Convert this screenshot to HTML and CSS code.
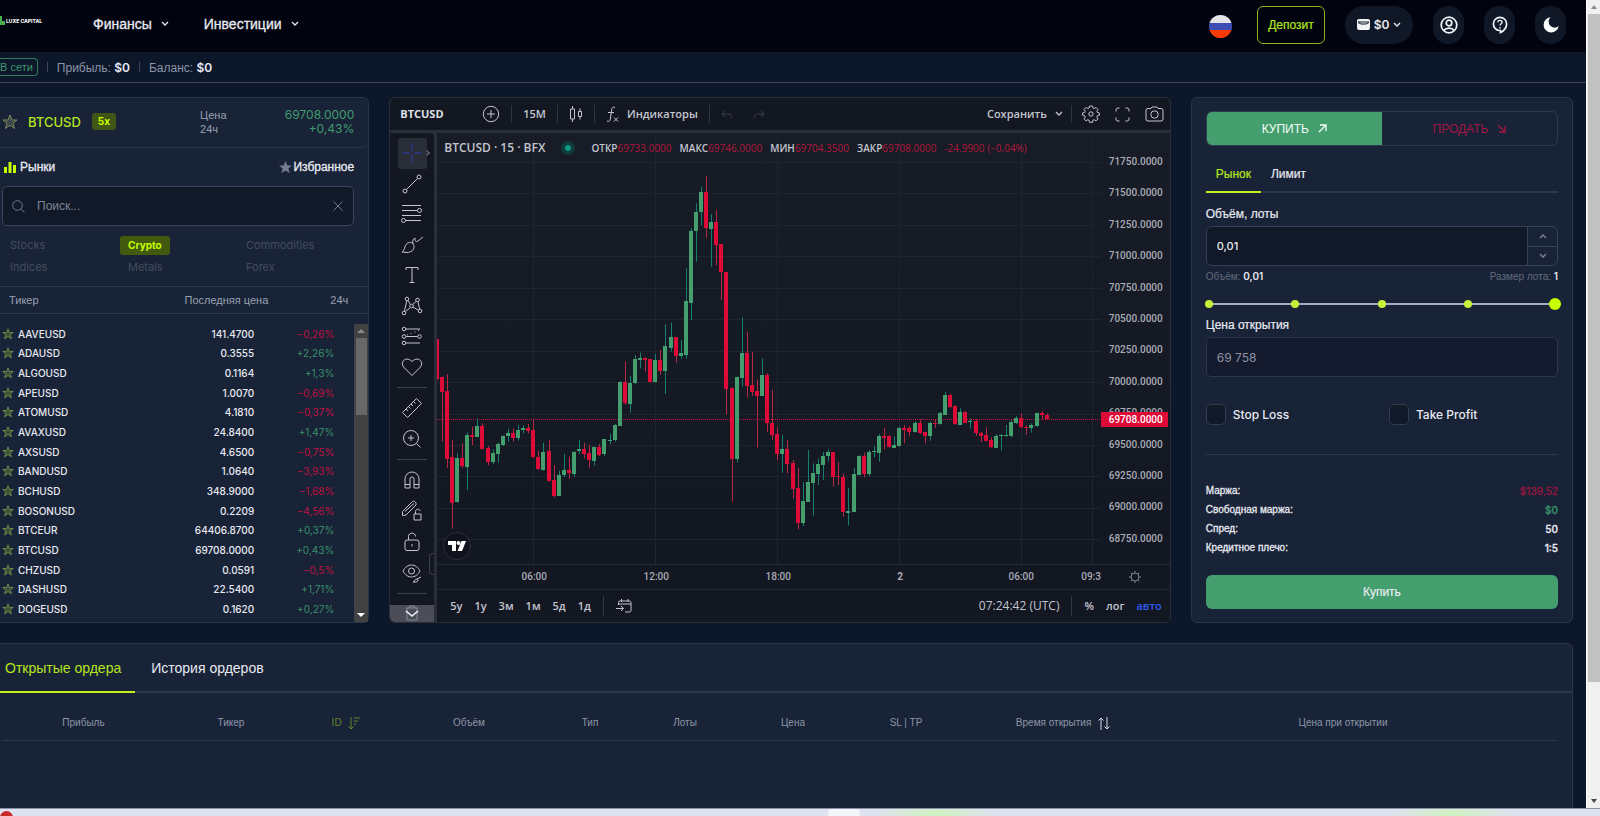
FILE: index.html
```html
<!DOCTYPE html>
<html lang="ru">
<head>
<meta charset="utf-8">
<title>Luxe Capital</title>
<link rel="stylesheet" href="styles.css">
</head>
<body>
<div class="window">
<div class="page">
  <header class="topbar">
    <a class="logo" href="#"><svg width="5" height="10" viewBox="0 0 5 10" fill="#4caf50"><path d="M0 0h2v5h3v4H0z"/></svg><span>LUXE CAPITAL</span></a>
    <nav class="nav">
      <button>Финансы <svg class="chev" viewBox="0 0 8 6"><path d="M1 1l3 3 3-3"/></svg></button>
      <button>Инвестиции <svg class="chev" viewBox="0 0 8 6"><path d="M1 1l3 3 3-3"/></svg></button>
    </nav>
    <div class="tools">
      <button class="flag" aria-label="Русский"></button>
      <button class="deposit">Депозит</button>
      <button class="wallet"><svg width="13" height="11" viewBox="0 0 13 11"><rect width="13" height="11" rx="2" fill="#f1f3f8"/><path d="M1 3h11M1 3.500l3 1.500h5l3-1.500" stroke="#111827"/></svg>$0 <svg class="chev" viewBox="0 0 8 6"><path d="M1 1l3 3 3-3"/></svg></button>
      <button class="pill" aria-label="Профиль"><svg width="18" height="18" viewBox="0 0 18 18" stroke="#f1f3f8" stroke-width="1.7"><circle cx="9" cy="9" r="7.8"/><circle cx="9" cy="7" r="2.8"/><path d="M3.8 14.4c2.600-3 7.800-3 10.400 0"/></svg></button>
      <button class="pill" aria-label="Помощь"><svg width="16" height="18" viewBox="0 0 16 18" stroke="#f1f3f8" stroke-width="1.700"><path d="M8.500 16.500v-2H8a6.600 6.600 0 1 1 6.600-6.600c0 3.800-2.600 6.800-6.100 8.600z"/><path d="M5.900 6.300c0-2.600 4.200-2.600 4.200 0 0 1.500-2.100 1.500-2.100 3.300M8 11v1.500" stroke-width="1.400"/></svg></button>
      <button class="pill" aria-label="Тема"><svg width="16" height="16" viewBox="0 0 16 16" fill="#fff"><path d="M7.500.3A7.600 7.600 0 1 0 15.700 9 5.900 5.900 0 1 1 7.500.3z"/></svg></button>
    </div>
  </header>

  <div class="status">
    <span class="online">В сети</span><i></i>
    <span>Прибыль: <b>$0</b></span><i></i>
    <span>Баланс: <b>$0</b></span>
  </div>

  <main class="board">
    <section class="panel market">
      <div class="instrument">
        <svg class="star big" viewBox="0 0 16 16"><path d="M8 1l2 5h5l-4 3.200 1.600 5.300L8 11.300l-4.600 3.200L5 9.200 1 6h5z"/></svg>
        <strong>BTCUSD</strong><em>5x</em>
        <div class="lbl">Цена<br>24ч</div>
        <div class="val">69708.0000<br>+0,43%</div>
      </div>
      <div class="mhead">
        <span><svg width="12" height="12" viewBox="0 0 12 12" fill="#c6ff00"><path d="M0 6h3v6H0zM4.500 1h3v11h-3zM9 4h3v8H9z"/></svg>Рынки</span>
        <span><svg width="13" height="13" viewBox="0 0 16 16" fill="#757d8e"><path d="M8 0l2.200 5.600H16l-4.600 3.700L13.200 15 8 11.600 2.800 15l1.800-5.700L0 5.600h5.800z"/></svg>Избранное</span>
      </div>
      <label class="search">
        <svg width="13" height="13" viewBox="0 0 13 13"><circle cx="5.500" cy="5.500" r="4.800"/><path d="M9 9l3.500 3.500"/></svg>
        <input type="text" placeholder="Поиск..." aria-label="Поиск">
        <svg width="10" height="10" viewBox="0 0 10 10"><path d="M.5.5l9 9M9.500.5l-9 9"/></svg>
      </label>
      <div class="cats">
        <button>Stocks</button><button class="on">Crypto</button><button>Commodities</button>
        <button>Indices</button><button>Metals</button><button>Forex</button>
      </div>
      <div class="thead"><span>Тикер</span><span>Последняя цена</span><span>24ч</span></div>
      <div class="listwrap">
        <table class="list"><tbody id="list"></tbody></table>
        <div class="scroll dark"><i class="up"></i><b></b><i class="down"></i></div>
      </div>
    </section>

    <section class="panel chart">
      <div class="ctop">
        <b class="sym">BTCUSD</b>
        <button aria-label="Сравнить"><svg width="18" height="18" viewBox="0 0 18 18"><circle cx="9" cy="9" r="7.700"/><path d="M9 5v8M5 9h8"/></svg></button>
        <i></i><button class="m15">15М</button><i></i>
        <button aria-label="Свечи"><svg width="14" height="18" viewBox="0 0 14 18"><path d="M1.500 4h4v10h-4zM3.500 1v3M3.500 14v3M9.500 6.500h3v5h-3zM11 3.500v3M11 11.500v3"/></svg></button>
        <i></i>
        <button class="ind"><svg width="13" height="17" viewBox="0 0 13 17"><path d="M9 1.500c-2-1-3 0-3.300 2L4.300 13c-.3 2-1.500 3-3.300 2M2 6.500h6M8 11.500l4 4M12 11.500l-4 4"/></svg>Индикаторы</button>
        <i></i>
        <button class="dim" aria-label="Отменить"><svg width="12" height="9" viewBox="0 0 12 9"><path d="M4 1L1 4l3 3M1 4h6c3 0 4 1.500 4 4"/></svg></button>
        <button class="dim" aria-label="Повторить"><svg width="12" height="9" viewBox="0 0 12 9"><path d="M8 1l3 3-3 3M11 4H5C2 4 1 5.500 1 8"/></svg></button>
        <button class="save">Сохранить <svg class="chev" viewBox="0 0 8 6"><path d="M1 1l3 3 3-3"/></svg></button>
        <i></i>
        <button aria-label="Настройки"><svg width="18" height="18" viewBox="0 0 18 18"><path d="M7.500 1h3l.4 2 1.300.6 1.800-1.200 2 2-1.200 1.800.6 1.300 2 .4v2.400l-2 .4-.6 1.400 1.200 1.800-2 2-1.800-1.200-1.300.6-.4 2h-3l-.4-2-1.300-.6L4 15.900l-2-2 1.200-1.800-.6-1.400-2-.4V7.900l2-.4.6-1.300L2 4.400l2-2 1.800 1.200L7.100 3z"/><circle cx="9" cy="9" r="2.200"/></svg></button>
        <button aria-label="Во весь экран"><svg width="15" height="15" viewBox="0 0 15 15"><path d="M1 4.500V3a2 2 0 0 1 2-2h1.500M10.500 1H12a2 2 0 0 1 2 2v1.500M14 10.500V12a2 2 0 0 1-2 2h-1.500M4.500 14H3a2 2 0 0 1-2-2v-1.500"/></svg></button>
        <button aria-label="Снимок"><svg width="19" height="16" viewBox="0 0 19 16"><path d="M6 2.500L7 1h5l1 1.500h3a2 2 0 0 1 2 2V13a2 2 0 0 1-2 2H3a2 2 0 0 1-2-2V4.500a2 2 0 0 1 2-2z"/><circle cx="9.500" cy="8.500" r="3.700"/></svg></button>
      </div>
      <div class="cbody">
        <div class="draw">
          <div class="grp g8">
            <button class="cross" aria-label="Курсор"><svg viewBox="0 0 28 28"><path d="M14 4v8M14 16v8M4 14h8M16 14h8"/></svg></button>
            <button aria-label="Линия"><svg viewBox="0 0 28 28"><circle cx="7" cy="21" r="2"/><circle cx="21" cy="7" r="2"/><path d="M8.500 19.500l11-11"/></svg></button>
            <button aria-label="Фибоначчи"><svg viewBox="0 0 28 28"><path d="M4 5.500h19M4 10.500h15M4 15.500h19M8 20.500h15"/><circle cx="21.500" cy="10.500" r="2"/><circle cx="5.500" cy="20.500" r="2"/></svg></button>
            <button aria-label="Кисть"><svg viewBox="0 0 28 28"><path d="M4 21c3-1 2-6 5-8.500 3-2.500 7-.5 7 3s-3 6-7 6zM15 13c-1-3 0-5 2-6 0 4 1 4 3 3l5-4"/></svg></button>
            <button aria-label="Текст"><svg viewBox="0 0 28 28"><path d="M8 9V6.500h12V9M14 6.500v15M11.500 21.500h5"/></svg></button>
            <button aria-label="Паттерны"><svg viewBox="0 0 28 28"><circle cx="9" cy="7" r="1.800"/><circle cx="19.500" cy="8" r="1.800"/><circle cx="13.500" cy="14" r="1.800"/><circle cx="6" cy="21" r="1.800"/><circle cx="22" cy="19" r="1.800"/><path d="M8.700 9L6.500 19M10 8.500l2.500 4M18 9.500l-3.300 3M20 10l1.600 7M7.500 19.500l5-4M15 15l5.400 3.200"/></svg></button>
            <button aria-label="Прогноз"><svg viewBox="0 0 28 28"><circle cx="6" cy="7" r="1.800"/><circle cx="6" cy="14.500" r="1.800"/><circle cx="6" cy="21" r="1.800"/><circle cx="21.500" cy="14.500" r="1.800"/><path d="M8 7h14M8 14.500h11.500M8 21h14"/><path d="M9 13l13-5" stroke-dasharray="1 3"/></svg></button>
            <button aria-label="Фигуры"><svg viewBox="0 0 28 28"><path d="M14 22.500L6 14.500C1 9 8 2.500 14 8.500c6-6 13 .5 8 6z"/></svg></button>
          </div>
          <hr>
          <div class="grp g2">
            <button aria-label="Линейка"><svg viewBox="0 0 28 28"><path d="M4.500 18.500l14-14 5 5-14 14zM8 15l2 2M10.500 12.500l2 2M13 10l2 2M15.500 7.500l2 2" stroke-linejoin="round"/></svg></button>
            <button aria-label="Масштаб"><svg viewBox="0 0 28 28"><circle cx="13" cy="13" r="7.500"/><path d="M18.500 18.500l4 4M13 10v6M10 13h6"/></svg></button>
          </div>
          <hr>
          <div class="grp g4">
            <button aria-label="Магнит"><svg viewBox="0 0 28 28"><path d="M7 22v-9a7 7 0 0 1 14 0v9h-5v-9a2 2 0 0 0-4 0v9zM7 18.500h5M16 18.500h5"/></svg></button>
            <button aria-label="Рисование"><svg viewBox="0 0 28 28"><path d="M4.500 18.500v-4l10-10c2-1 4 1 3.500 3.500l-10 10zM7 14.500l9-8M16 17h7v6h-7zM17.500 17v-2.500c0-3 4.500-3 4.500-.5"/></svg></button>
            <button aria-label="Блокировка"><svg viewBox="0 0 28 28"><rect x="7" y="12" width="14" height="10.500" rx="2"/><path d="M10.500 12V8.500c0-4.500 7-4.500 7 0M14 16v2.500"/></svg></button>
            <button aria-label="Скрыть"><svg viewBox="0 0 28 28"><path d="M5 12c4-8 13-8 17 0-4 8-13 8-17 0z"/><circle cx="13.500" cy="12" r="3"/><path d="M15 23c2 0 1-3 4-3 2 0 1 3-1 3zM19 20l4-2"/></svg></button>
          </div>
          <hr>
          <div class="more"><svg width="16" height="16" viewBox="0 0 16 16"><path d="M2 3h12M5.500 3V1h5v2M3 3v12h10V3" stroke="#858994"/><path d="M2 6l6 5 6-5" stroke="#f0f2f5" stroke-width="1.600"/></svg></div>
          <span class="arrow"></span>
          <span class="collapse"></span>
        </div>
        <div class="view">
          <div class="plotrow">
            <div class="plot">
              <svg id="plot" width="100%" height="100%"></svg>
              <div class="legend"><b>BTCUSD · 15 · BFX</b><i></i><span>ОТКР<u>69733.0000</u></span><span>МАКС<u>69746.0000</u></span><span>МИН<u>69704.3500</u></span><span>ЗАКР<u>69708.0000</u></span><u>-24.9900 (−0.04%)</u></div>
              <div class="tv"><svg width="18" height="10" viewBox="0 0 18 10" fill="#fff"><path d="M0 0h8v10H4V4H0zM13.500 0H18l-4 10H9.500z"/><circle cx="10.500" cy="2" r="2"/></svg></div>
            </div>
            <div class="prices">
              <span>71750.0000</span><span>71500.0000</span><span>71250.0000</span><span>71000.0000</span><span>70750.0000</span><span>70500.0000</span><span>70250.0000</span><span>70000.0000</span><span>69750.0000</span><span>69500.0000</span><span>69250.0000</span><span>69000.0000</span><span>68750.0000</span>
              <b>69708.0000</b>
            </div>
          </div>
          <div class="times">
            <div class="tl"><span>06:00</span><span>12:00</span><span>18:00</span><b>2</b><span>06:00</span><span class="cut">09:30</span></div>
            <button aria-label="Настройки шкалы"><svg width="14" height="14" viewBox="0 0 14 14"><circle cx="7" cy="7" r="4"/><path d="M7 1v2M7 11v2M1 7h2M11 7h2M2.800 2.800l1.300 1.300M9.900 9.900l1.300 1.300M2.800 11.200l1.300-1.300M9.900 4.100l1.300-1.300"/></svg></button>
          </div>
          <div class="ranges">
            <button>5y</button><button>1y</button><button>3м</button><button>1м</button><button>5д</button><button>1д</button><i></i>
            <button aria-label="Дата"><svg width="16" height="14" viewBox="0 0 16 14"><path d="M2.500 6V3.500a1.500 1.500 0 0 1 1.500-1.500h9.500A1.500 1.500 0 0 1 15 3.500v8a1.500 1.500 0 0 1-1.500 1.500H9M2.500 5H15M5.500 0v3M12 0v3M0 9.500h7M5 7l2.500 2.500L5 12"/></svg></button>
            <span class="clock">07:24:42 (UTC)</span><i></i>
            <button>%</button><button>лог</button><button class="auto">авто</button>
          </div>
        </div>
      </div>
    </section>

    <section class="panel trade">
      <div class="sides">
        <button class="buy">КУПИТЬ <svg width="9" height="9" viewBox="0 0 9 9"><path d="M1 8l7-7M2 1h6v6"/></svg></button>
        <button class="sell">ПРОДАТЬ <svg width="9" height="9" viewBox="0 0 9 9"><path d="M1 1l7 7M8 2v6H2"/></svg></button>
      </div>
      <div class="ttabs"><button class="on">Рынок</button><button>Лимит</button></div>
      <label class="flabel" for="vol">Объём, лоты</label>
      <div class="stepper">
        <input id="vol" type="text" inputmode="decimal" value="0,01">
        <div><button aria-label="Больше"><svg class="chev" viewBox="0 0 8 6"><path d="M1 5l3-3 3 3"/></svg></button><button aria-label="Меньше"><svg class="chev" viewBox="0 0 8 6"><path d="M1 1l3 3 3-3"/></svg></button></div>
      </div>
      <div class="hint"><span>Объём: <b>0,01</b></span><span>Размер лота: <b>1</b></span></div>
      <div class="slider"><div class="dots"><i></i><i></i><i></i><i></i><i></i></div><input type="range" min="0" max="4" value="4" aria-label="Объём"></div>
      <label class="flabel" for="open">Цена открытия</label>
      <input class="openprice" id="open" type="text" value="69 758" readonly>
      <div class="checks"><label><input type="checkbox">Stop Loss</label><label><input type="checkbox">Take Profit</label></div>
      <dl class="sum">
        <div><dt>Маржа:</dt><dd class="neg">$139,52</dd></div>
        <div><dt>Свободная маржа:</dt><dd class="pos">$0</dd></div>
        <div><dt>Спред:</dt><dd>50</dd></div>
        <div><dt>Кредитное плечо:</dt><dd>1:5</dd></div>
      </dl>
      <button class="submit">Купить</button>
    </section>
  </main>

  <section class="panel orders">
    <div class="otabs"><button class="on">Открытые ордера</button><button>История ордеров</button></div>
    <table>
      <colgroup><col class="c1"><col class="c2"><col class="c3"><col class="c4"><col class="c5"><col class="c6"><col class="c7"><col class="c8"><col class="c9"><col class="c10"><col></colgroup>
      <thead><tr><th>Прибыль</th><th>Тикер</th><th class="sorted">ID <svg width="12" height="13" viewBox="0 0 12 13"><path d="M3 0v12M.5 9.500L3 12l2.500-2.500M6 1h6M6 4h4M6 7h2"/></svg></th><th>Объём</th><th>Тип</th><th>Лоты</th><th>Цена</th><th>SL | TP</th><th>Время открытия <svg class="lt" width="12" height="13" viewBox="0 0 12 13"><path d="M3 13V1M.5 3.500L3 1l2.500 2.500M9 0v12M6.500 9.500L9 12l2.500-2.500"/></svg></th><th>Цена при открытии</th><td></td></tr></thead>
    </table>
  </section>
</div>
<div class="scroll light"><i class="up"></i><b></b><i class="down"></i></div>
</div>
<footer class="taskbar"><i></i><b></b></footer>
<script src="app.js"></script>
</body>
</html>
```
FILE: styles.css
```css
*{box-sizing:border-box}
body{margin:0;min-height:100vh;display:flex;flex-direction:column;background:#0d172a;color:#e8eaf2;font:11px/14px "Liberation Sans",sans-serif}
button{font:inherit;color:inherit;background:none;border:0;padding:0;margin:0;display:inline-flex;align-items:center;justify-content:center}
input{font:inherit;color:inherit;margin:0}
svg{flex:none}
:where(svg:not([fill])){fill:none}
.chev{width:8px;height:6px;stroke:currentColor;stroke-width:1.300}
.window{flex:1;display:flex}
.page{flex:1;min-width:0;display:flex;flex-direction:column}
.topbar{height:52px;background:#01040f;display:flex;align-items:center;padding:0 20px 3px 0}
.logo{display:flex;align-items:center;gap:1px;color:#f3f5f8;text-decoration:none;font:800 5px/10px Inter,sans-serif;width:93px;padding-bottom:7px}
.nav{display:flex;gap:35px;flex:1;font-size:14px;padding-bottom:1px;-webkit-text-stroke:.3px}
.nav button{gap:9px}
.tools{display:flex;align-items:center}
.flag{width:23px;height:23px;border-radius:50%;background:linear-gradient(#e4e4e8 33%,#3c4eb4 33% 66%,#f83a08 66%);margin:4px 25px 0 0}
.deposit{width:68px;height:38px;border:1px solid #8fb31a;border-radius:6px;color:#b5e61d;font-size:12px;margin-right:20px;-webkit-text-stroke:.2px}
.wallet{width:68px;height:38px;border-radius:19px;background:#101827;gap:4px;font:600 12px Inter,sans-serif;margin-right:20px}
.pill{width:31px;height:38px;border-radius:16px;background:#101827;margin-right:20px}
.pill:last-child{margin-right:0}
.status{height:31px;border-bottom:1px solid #3c4658;display:flex;align-items:center;color:#8b94a6;font-size:12px}
.status b{color:#e8eaf6;font:600 12px Inter,sans-serif}
.status i{width:1px;height:10px;background:#3c4658;margin:0 9px}
.online{border:1px solid #317c5c;border-left:0;border-radius:0 4px 4px 0;color:#3c966c;font-size:11px;line-height:16px;padding:0 4px 0 0}
.board{display:grid;grid-template-columns:369fr 781fr 382fr;gap:20px;padding:14px 13px 20px 0}
.panel{background:#192337;border:1px solid #2a3548;border-radius:6px;min-width:0}
.market{border-left:0;border-radius:0 6px 6px 0}
.instrument{height:50px;border-bottom:1px solid #2a3548;border-radius:0 0 6px 0;display:flex;align-items:center;padding:0 14px 2px 2px}
.star{width:12px;height:12px;stroke:#7c9d52;fill:#3a5335}
.star.big{width:16px;height:16px;stroke:#7d8758;fill:#3b4649}
.instrument strong{font:500 13px Inter,sans-serif;color:#b5e61d;margin:0 11px 0 10px}
.instrument em{font:700 10px/17px Inter,sans-serif;background:#415514;color:#c6ff00;border-radius:3px;padding:0 6px}
.lbl{color:#98a1b2;flex:1;margin-left:84px}
.val{font:12px/14px Inter,sans-serif;color:#3f9c70;text-align:right}
.mhead{display:flex;justify-content:space-between;padding:10px 14px 0 4px;font-size:12px;height:38px;-webkit-text-stroke:.3px}
.mhead span{display:flex;gap:4px;align-items:center;height:18px}
.mhead span:last-child{gap:1px}
.search{display:flex;align-items:center;height:40px;margin:0 14px 0 2px;background:#111827;border:1px solid #3b4657;border-radius:5px;padding:0 10px 0 9px}
.search svg{stroke:#737b8a}
.search input{flex:1;min-width:0;background:none;border:0;outline:0;padding:0 12px;font-size:12px}
.search input::placeholder{color:#7c8493;opacity:1}
.cats{display:grid;grid-template-columns:repeat(3,118px);height:60px;padding:8px 0 8px 2px;color:#414c5e;font:11px Inter,sans-serif;justify-items:start;align-items:center}
.cats button{height:19px;padding:0 8px}
.cats .on{background:#415a0e;color:#c6ff00;border-radius:3px;font-weight:700;font-size:10px}
.thead{display:flex;height:28px;border:solid #2a3548;border-width:1px 0;align-items:center;color:#98a1b2;padding:0 20px 0 9px}
.thead span:nth-child(2){flex:1;text-align:right;padding-right:62px}
.listwrap{display:flex;align-items:flex-start;height:308px;padding-top:10px}
.list{flex:1;height:295px;border-collapse:collapse;font:500 10px/14px Inter,sans-serif}
.list td{padding:0;text-align:right}
.list td:first-child{text-align:left;padding-left:2px}
.list td:first-child span{display:flex;gap:4px;align-items:center}
.list td:nth-child(2){width:130px}
.list td:last-child{width:100px;padding-right:20px;font-weight:400}
.pos{color:#37906a}
.list .neg{color:#bf1140}
.scroll{display:flex;flex-direction:column;align-items:center;position:relative}
.scroll i{height:14px;display:flex;align-items:center}
.scroll i:after{content:"";border:4px solid transparent;border-top:0;border-bottom:4px solid #8a8a8a}
.scroll .down{margin-top:auto}
.scroll .down:after{transform:rotate(180deg)}
.dark{width:14px;background:#424242;align-self:stretch}
.dark b{width:11px;height:77px;background:#686868}
.dark .down:after{border-bottom-color:#fff}
.light{width:14px;background:#f0f0f0;border-left:1px solid #fff}
.light b{width:12px;flex:0 1 668px;background:#c1c1c1}
.light i:after{border-left-width:3px;border-right-width:3px}
.light .down:after{border-bottom-color:#444}

.chart{background:#131722;border-color:#2a2f3b;color:#c3c6cf;display:flex;flex-direction:column;overflow:hidden;font-family:"Open Sans",sans-serif}
.chart svg{stroke:currentColor}
.ctop{height:32px;display:flex;align-items:center;padding:0 6px 0 10px;font-size:11px;font-weight:600}
.ctop i{width:1px;height:18px;background:#30343f;margin:0 11px}
.sym{width:82px;color:#dfe1e8;font-weight:700}
.ind{gap:8px}
.dim{color:#3b3f4a;margin-right:20px}
.save{gap:8px;margin-left:auto}
.ctop .save+i{margin:0 10px 0 8px}
.ctop .save~button{margin-right:15px}
.ctop .save~button:last-child{margin-right:0}
.cbody{flex:1;display:flex;background:#2a2e39;padding-top:3px;gap:3px}
.draw{width:44px;background:#131722;border-radius:0 4px 0 0;padding-top:5px;position:relative}
.draw svg{width:28px;height:28px}
.grp{display:grid;grid-auto-rows:1fr;justify-items:center}
.g8{height:244px}.g2{height:61px}.g4{height:123px}
.draw button{border-radius:3px;width:29px}
.cross{background:#2a2e39;color:#2c3ba8}
.draw hr{border:0;height:1px;background:#3b3f4b;margin:5px 7px}
.more{position:absolute;left:0;right:0;bottom:0;height:17px;background:#4b4e59;display:flex;justify-content:center}
.draw .more svg{width:16px;height:16px;stroke:none}
.arrow{position:absolute;right:5px;top:18px;width:4px;height:4px;border:solid #777b86;border-width:1px 1px 0 0;transform:rotate(45deg)}
.collapse{position:absolute;right:0;bottom:47px;width:5px;height:22px;border:1px solid #3b3f4b;border-right:0;border-radius:4px 0 0 4px}
.view{flex:1;min-width:0;display:flex;flex-direction:column;background:#131722;border-radius:4px 0 0 0}
.plotrow{flex:1;display:flex}
.plot{flex:1;min-width:0;position:relative;overflow:hidden;background:linear-gradient(#181c27,#131722)}
.plot>svg{position:absolute;inset:0;stroke:none}
.legend{position:absolute;left:7px;top:6px;display:flex;gap:8px;align-items:center;font-size:10px;line-height:18px;font-weight:600;white-space:nowrap}
.legend b{font-size:12px;font-weight:600}
.legend i{width:14px;height:14px;border-radius:50%;background:#0d9a80;border:4px solid #103d3c;margin:0 8px}
.legend u{text-decoration:none;color:#b0183c;font-weight:400}
.tv{position:absolute;left:6px;bottom:4px;width:28px;height:28px;border:1px solid #2a2e39;border-radius:50%;background:#10131c;display:flex;align-items:center;justify-content:center}
.tv svg{stroke:none}
.prices{width:69px;position:relative;display:flex;flex-direction:column;justify-content:space-between;padding:22px 0 18px 8px;font:500 10px/14px Roboto,sans-serif;background:linear-gradient(#181c27,#131722);color:#a9acb6}
.prices b{position:absolute;left:0;right:2px;top:279px;line-height:15px;padding-left:8px;background:#de0a38;color:#fff;font-weight:500}
.times{height:25px;border-top:1px solid #242833;display:flex;align-items:center;font:500 10px/14px Roboto,sans-serif;color:#a9acb6}
.tl{flex:1;min-width:0;display:grid;grid-template-columns:repeat(4,122px) 120px 1fr;padding-left:36px;text-align:center;overflow:hidden}
.tl .cut{text-align:left;min-width:0}
.times button{width:69px;color:#7d818c}
.ranges{height:33px;border-top:1px solid #242833;display:flex;align-items:center;gap:12px;padding:0 8px 0 13px;font-size:11px;font-weight:600}
.ranges i{width:1px;height:20px;background:#353945}
.clock{margin-left:auto;font-size:12px;font-weight:400}
.auto{color:#2f5bee}

.trade{padding:13px 14px 13px;display:flex;flex-direction:column}
.sides{display:grid;grid-template-columns:1fr 1fr;height:35px;border:1px solid #2e3a4e;border-radius:6px;overflow:hidden;font-size:12px}
.sides button{gap:9px}
.sides svg{stroke:currentColor;stroke-width:1.300}
.buy{background:#449e6e;color:#f4fff8}
.sell{color:#a31643}
.ttabs{display:flex;margin-top:15px;border-bottom:2px solid #2d384b;font-size:12px;height:32px;-webkit-text-stroke:.2px}
.ttabs button{padding:0 10px 5px;margin-bottom:-2px;border-bottom:2px solid transparent}
.ttabs .on{color:#b5e61d;border-color:#c6f01c}
.flabel{margin-top:13px;font-size:12px;line-height:16px;-webkit-text-stroke:.2px}
.stepper{margin-top:4px;height:40px;display:flex;border:1px solid #364154;border-radius:6px;overflow:hidden}
.stepper input{flex:1;min-width:0;background:#111827;border:0;padding:0 10px;font:500 11px Inter,sans-serif}
.stepper div{width:30px;border-left:1px solid #364154;display:grid;color:#7d8594}
.stepper button+button{border-top:1px solid #364154}
.hint{display:flex;justify-content:space-between;color:#606a7c;margin-top:3px;font-size:10px;line-height:16px}
.hint b{color:#e4e6ee;font:600 10px Inter,sans-serif}
.slider{position:relative;height:18px;margin:10px -3px 0}
.slider input{-webkit-appearance:none;appearance:none;position:absolute;inset:0;width:100%;height:18px;background:none}
.slider input::-webkit-slider-thumb{-webkit-appearance:none;width:12px;height:12px;border-radius:50%;background:#c6ff00}
.dots{position:absolute;inset:0 2px;display:flex;justify-content:space-between;align-items:center;background:linear-gradient(#a7aec0,#a7aec0) center/calc(100% - 8px) 2px no-repeat}
.dots i{width:8px;height:8px;border-radius:50%;background:#c6f03a}
.slider+.flabel{margin-top:4px}
.openprice{height:40px;margin-top:4px;background:#151b2e;border:1px solid #2c374b;border-radius:5px;padding:0 10px;color:#8d93a3;font:12px Inter,sans-serif;width:100%}
.checks{display:grid;grid-template-columns:1fr 1fr;gap:14px;margin-top:27px;padding-bottom:29px;border-bottom:1px solid #2d384b;font:500 12px Inter,sans-serif}
.checks label{display:flex;align-items:center;gap:7px}
.checks input{-webkit-appearance:none;appearance:none;width:20px;height:21px;border:1px solid #323d51;border-radius:5px;background:#111827}
.sum{margin:28px 0 0;display:flex;flex-direction:column;gap:3px;font-size:10px}
.sum div{display:flex;justify-content:space-between;line-height:16px;-webkit-text-stroke:.3px}
.sum dd{margin:0;font:500 10px/16px Inter,sans-serif}
.sum dd.neg{color:#8e1640}
.submit{margin-top:auto;height:34px;background:#449e6e;border-radius:6px;font-size:12px;-webkit-text-stroke:.2px}

.orders{flex:1;min-height:164px;margin-right:13px;border-left:0;border-bottom:0;border-radius:0 6px 0 0}
.otabs{display:flex;height:49px;border-bottom:2px solid #2d384b;font-size:14px}
.otabs button{padding:0 16px 0;margin-bottom:-2px;border-bottom:2px solid transparent}
.otabs .on{color:#b5e61d;border-color:#c6f01c;padding:0 14px 0 5px}
.orders table{width:calc(100% - 17px);margin-left:2px;table-layout:fixed;border-collapse:collapse;border-bottom:1px solid #2d384b}
.orders th{height:47px;padding:13px 0 0;font-weight:400;font-size:10px;color:#8d96a8}
.orders th svg{stroke:currentColor;vertical-align:middle;margin-left:4px}
.orders th .lt{stroke:#d6d9e2}
.orders .sorted{color:#66842a}
.c1{width:163px}.c2{width:132px}.c3{width:98px}.c4{width:148px}.c5{width:94px}.c6{width:96px}.c7{width:120px}.c8{width:106px}.c9{width:208px}.c10{width:352px}
.taskbar{height:8px;border-top:1px solid #8c93a6;display:flex;overflow:hidden;align-items:center;background:radial-gradient(ellipse 60px 14px at 935px 5px,#cdf2bd,transparent),radial-gradient(ellipse 60px 14px at 1452px 5px,#cdf2bd,transparent),#dfe2ef}
.taskbar i{width:13px;height:13px;border-radius:50%;background:#c92a2a;margin-top:10px}
.taskbar b{width:32px;height:8px;background:#f5f6fa;border-radius:4px;margin-left:calc(52% - 17px)}
```
FILE: app.js
```js
const tickers = [
  ["AAVEUSD", "141.4700", "−0,26%"], ["ADAUSD", "0.3555", "+2,26%"], ["ALGOUSD", "0.1164", "+1,3%"],
  ["APEUSD", "1.0070", "−0,69%"], ["ATOMUSD", "4.1810", "−0,37%"], ["AVAXUSD", "24.8400", "+1,47%"],
  ["AXSUSD", "4.6500", "−0,75%"], ["BANDUSD", "1.0640", "−3,93%"], ["BCHUSD", "348.9000", "−1,68%"],
  ["BOSONUSD", "0.2209", "−4,56%"], ["BTCEUR", "64406.8700", "+0,37%"], ["BTCUSD", "69708.0000", "+0,43%"],
  ["CHZUSD", "0.0591", "−0,5%"], ["DASHUSD", "22.5400", "+1,71%"], ["DOGEUSD", "0.1620", "+0,27%"]
];
const star = '<svg class="star" viewBox="0 0 16 16"><path d="M8 1l2 5h5l-4 3.200 1.600 5.300L8 11.300l-4.600 3.200L5 9.200 1 6h5z"/></svg>';
document.getElementById("list").innerHTML = tickers.map(([n, p, c]) =>
  `<tr><td><span>${star}${n}</span></td><td>${p}</td><td class="${c[0] === "+" ? "pos" : "neg"}">${c}</td></tr>`).join("");

// One candle per 15 minutes: direction, body top, body bottom, high, low.
// Values are thirds of a pixel down from the 70250 line.
const candles = `r -32 88 -32 90;r 80 125 80 275;r 122 325 72 353;r 320 458 270 536;g 325 458 310 458;r 325 350 280 355;g 255 350 247 420;r 255 262 230 285;g 228 262 205 262;r 228 298 220 298;r 293 336 288 346;g 310 336 298 342;g 283 312 278 338;g 258 284 256 288;g 250 260 236 275;r 248 264 235 275;g 240 265 225 272;g 235 242 226 250;r 234 243 222 250;r 241 323 208 323;r 321 358 302 360;g 305 358 278 362;r 304 394 270 394;r 391 438 346 442;g 376 438 362 438;g 361 377 312 382;r 361 371 320 386;g 305 371 303 380;g 298 305 270 312;r 298 312 278 325;r 310 332 284 353;g 290 332 290 347;r 290 314 282 318;g 268 314 266 318;g 269 273 252 282;g 226 272 222 275;g 97 228 94 228;r 97 160 35 165;g 98 160 78 188;g 27 100 15 102;g 23 30 8 55;r 24 30 22 65;r 28 97 28 97;g 30 97 12 97;r 30 62 0 74;g -12 62 -77 132;g -38 -6 -82 5;r -38 20 -38 38;g 10 20 -30 26;g -147 14 -245 26;g -357 -142 -365 -90;g -414 -356 -440 -265;g -473 -412 -490 -375;r -473 -364 -522 -336;g -384 -364 -408 -250;r -384 -316 -420 -254;r -317 -232 -317 -150;r -234 118 -234 192;r 115 328 112 455;g 82 328 80 338;g 8 84 -98 110;r 10 110 -55 142;r 106 127 5 138;r 124 138 88 293;g 75 137 25 137;r 75 220 70 245;r 219 255 120 270;r 252 312 232 330;g 297 312 255 368;r 297 342 270 370;r 338 416 330 446;r 414 519 354 538;g 452 519 396 528;g 397 456 300 456;g 370 399 340 497;g 343 374 326 405;g 317 345 306 390;g 307 320 298 335;r 307 382 307 410;r 378 382 336 405;r 381 486 370 500;g 483 489 415 526;g 371 486 354 486;g 318 374 316 376;r 318 373 308 382;g 306 372 300 378;g 304 308 288 322;g 257 308 252 335;r 257 262 234 298;r 258 290 256 292;g 284 292 260 294;g 234 289 230 290;r 235 240 225 280;r 235 246 228 258;g 219 246 214 248;r 220 249 208 252;r 247 258 245 280;g 218 258 215 272;r 218 222 210 234;g 190 222 186 224;g 135 194 126 195;r 135 171 133 174;r 169 224 166 224;g 186 224 175 224;r 186 218 184 218;g 214 218 206 236;r 213 249 208 258;r 248 257 246 276;r 255 272 232 274;r 270 292 262 295;g 257 292 252 294;g 256 260 252 302;g 256 258 225 260;g 216 258 210 262;g 204 218 198 222;r 204 232 190 234;r 230 234 226 254;g 224 234 220 248;g 190 228 188 230;r 190 196 184 208;r 196 208 190 210`.split(";");
const y = v => 217 + v / 3;
let out = "";
for (let i = 0; i < 13; i++) out += `<rect x="0" y="${Math.round(29 + i * 31.44)}" width="100%" height="1" fill="#20242f"/>`;
for (const gx of [96, 218, 340, 462, 584, 655]) out += `<rect x="${gx}" y="0" width="1" height="100%" fill="#20242f"/>`;
out += `<line x1="0" x2="100%" y1="286.5" y2="286.5" stroke="#c5123d" stroke-dasharray="1 1"/>`;
candles.forEach((row, i) => {
  const [k, ...v] = row.split(" ");
  const [top, bottom, high, low] = v.map(n => y(+n));
  const x = Math.round(96.300 + (i - 19) * 5.083);
  const g = k === "g";
  out += `<rect x="${x}" y="${high}" width="1" height="${low - high}" fill="${g ? "#15806f" : "#b52a42"}"/>`;
  out += `<rect x="${x - 2}" y="${Math.round(top)}" width="4" height="${Math.max(1, Math.round(bottom - top))}" fill="${g ? "#449e6e" : "#de0a38"}"/>`;
});
document.getElementById("plot").innerHTML = out;
```
